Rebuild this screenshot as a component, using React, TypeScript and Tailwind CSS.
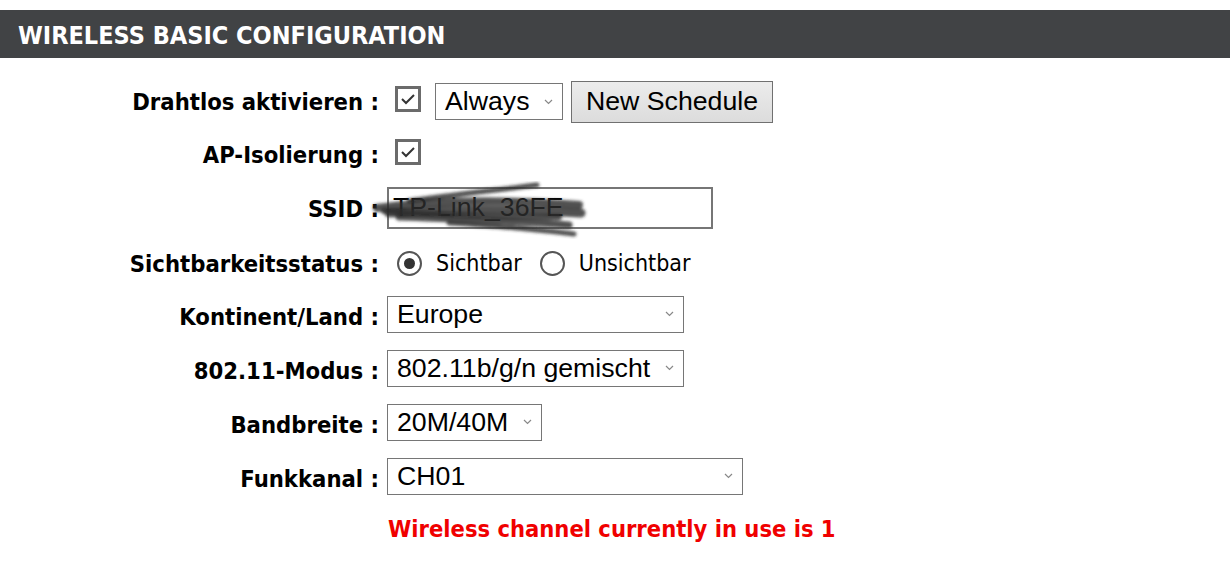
import React from "react";

const arial = { fontFamily: '"Liberation Sans", Arial, sans-serif' };
const tahoma = { fontFamily: '"DejaVu Sans Condensed", "DejaVu Sans", sans-serif' };

const Chevron = () => (
  <svg width="9" height="6" viewBox="0 0 9 6" className="absolute right-[9px] top-1/2 -translate-y-1/2">
    <path d="M1 1 L4.5 4.5 L8 1" fill="none" stroke="#888" strokeWidth="1.2" />
  </svg>
);

const Select = ({ value, w }: { value: string; w: string }) => (
  <div className={`relative h-[37px] ${w} border-[1.5px] border-[#767676] bg-white flex items-center pl-[9px]`}>
    <span className="text-[26.7px] text-black leading-none" style={arial}>{value}</span>
    <Chevron />
  </div>
);

const Check = () => (
  <div className="w-[26px] h-[26px] -translate-y-[3px] border-[3px] border-[#6b6b6b] bg-white flex items-center justify-center ml-[8px]">
    <svg width="16" height="14" viewBox="0 0 16 14">
      <path d="M2 7 L6 11 L14 3" fill="none" stroke="#333" strokeWidth="2" />
    </svg>
  </div>
);

const Radio = ({ on }: { on?: boolean }) => (
  <div className="w-[25px] h-[25px] rounded-full border-2 border-[#555] bg-white flex items-center justify-center">
    {on && <div className="w-[11px] h-[11px] rounded-full bg-[#333]" />}
  </div>
);

const Row = ({ label, h, off, children }: { label: string; h: string; off: string; children?: React.ReactNode }) => (
  <div className={`flex items-center ${h}`}>
    <div className={`w-[379px] text-right font-bold text-[23.6px] text-black whitespace-nowrap ${off}`} style={tahoma}>
      {label}
    </div>
    <div className="ml-[8px] flex items-center">{children}</div>
  </div>
);

export default function App() {
  return (
    <div className="w-[1230px] h-[576px] bg-white overflow-hidden">
      <div className="h-[10px]" />
      <div className="h-[48px] bg-[#414345] flex items-center pl-[18px]">
        <span className="text-white font-bold text-[25px] translate-y-[2px]" style={tahoma}>WIRELESS BASIC CONFIGURATION</span>
      </div>
      <div className="pt-[17px]">
        <Row label="Drahtlos aktivieren :" h="h-[53px]" off="translate-y-[1px]">
          <Check />
          <div className="ml-[14px]"><Select value="Always" w="w-[128px]" /></div>
          <button className="ml-[8px] h-[42px] w-[202px] border-[1.5px] border-[#707070] bg-gradient-to-b from-[#ececec] to-[#dcdcdc] text-[26.7px] text-black leading-none" style={arial}>
            New Schedule
          </button>
        </Row>
        <Row label="AP-Isolierung :" h="h-[53px]" off="translate-y-[1px]">
          <Check />
        </Row>
        <Row label="SSID :" h="h-[53px]" off="translate-y-[2px]">
          <div className="relative h-[42px] w-[326px] border-2 border-[#767676] bg-white flex items-center pl-[4px]">
            <span className="text-[26.7px] text-black leading-none" style={arial}>TP-Link_36FE</span>
            <svg className="absolute left-[-20px] top-[-8px]" width="240" height="60" viewBox="0 0 240 60">
              <defs>
                <filter id="bl"><feGaussianBlur stdDeviation="1.4" /></filter>
              </defs>
              <g filter="url(#bl)" fill="none" stroke="#2a2a2a" strokeOpacity="0.82" strokeLinecap="round">
                <path d="M40 20 C80 14 120 10 168 4" strokeWidth="5" />
                <path d="M8 27 C60 20 130 18 210 24" strokeWidth="8" />
                <path d="M20 32 C80 28 150 28 212 32" strokeWidth="9" />
                <path d="M30 36 C90 38 150 40 200 44" strokeWidth="7" />
                <path d="M80 42 C120 44 160 48 205 53" strokeWidth="5" />
                <path d="M15 30 C70 34 130 36 190 36" strokeWidth="6" />
              </g>
            </svg>
          </div>
        </Row>
        <Row label="Sichtbarkeitsstatus :" h="h-[53px]" off="translate-y-[4px]">
          <div className="ml-[10px] flex items-center text-[23px] text-black translate-y-[3px]" style={tahoma}>
            <Radio on />
            <span className="ml-[14px]">Sichtbar</span>
            <div className="ml-[18px]"><Radio /></div>
            <span className="ml-[14px]">Unsichtbar</span>
          </div>
        </Row>
        <Row label="Kontinent/Land :" h="h-[54px]" off="translate-y-[4px]">
          <Select value="Europe" w="w-[297px]" />
        </Row>
        <Row label="802.11-Modus :" h="h-[54px]" off="translate-y-[4px]">
          <Select value="802.11b/g/n gemischt" w="w-[297px]" />
        </Row>
        <Row label="Bandbreite :" h="h-[54px]" off="translate-y-[4px]">
          <Select value="20M/40M" w="w-[155px]" />
        </Row>
        <Row label="Funkkanal :" h="h-[54px]" off="translate-y-[4px]">
          <Select value="CH01" w="w-[356px]" />
        </Row>
        <div className="pl-[388px] h-[50px] flex items-center">
          <span className="text-[#f00000] font-bold text-[23.5px] translate-y-[2px]" style={tahoma}>Wireless channel currently in use is 1</span>
        </div>
      </div>
    </div>
  );
}
